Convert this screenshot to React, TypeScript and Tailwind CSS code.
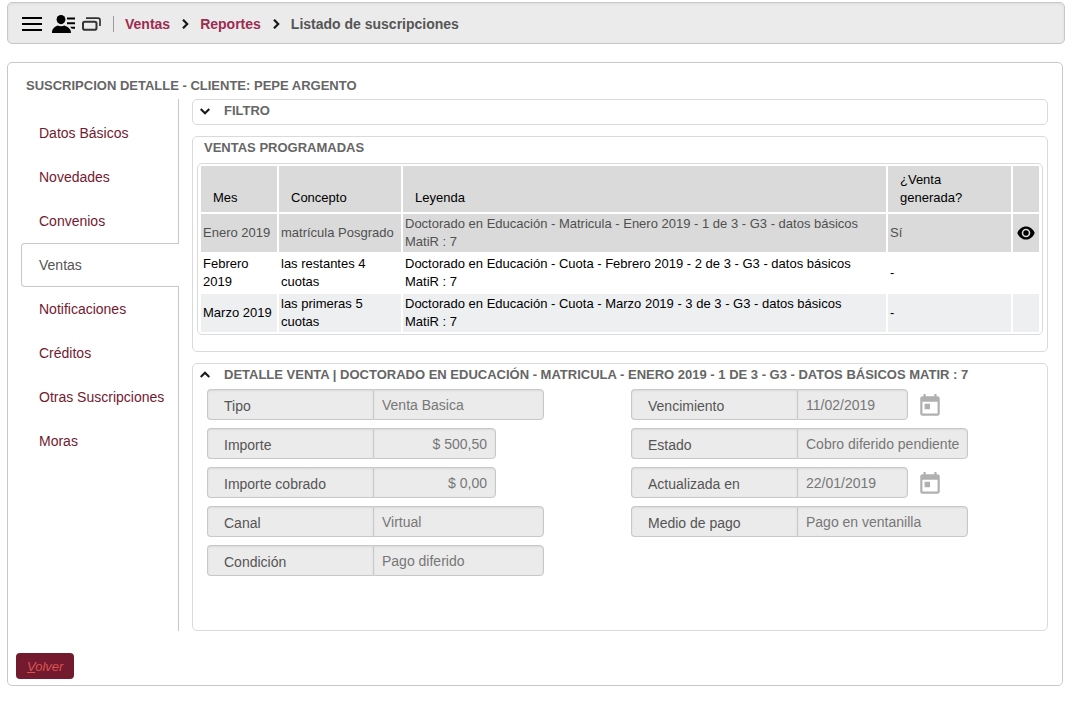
import { useState } from 'react'
import clsx from 'clsx'
import { MdToday } from 'react-icons/md'

// ========================================
// TYPES
// ========================================

interface Sale {
  month: string
  concept: string
  legend: string
  generated: boolean
}

interface FieldProps {
  id: string
  label: string
  value: string
  kind?: 'text' | 'amount' | 'date'
}

// ========================================
// DATA
// ========================================

const tabs = [
  'Datos Básicos',
  'Novedades',
  'Convenios',
  'Ventas',
  'Notificaciones',
  'Créditos',
  'Otras Suscripciones',
  'Moras',
]

// "MatiR : 7" is kept together with non-breaking spaces
const sales: Sale[] = [
  {
    month: 'Enero 2019',
    concept: 'matrícula Posgrado',
    legend: 'Doctorado en Educación - Matricula - Enero 2019 - 1 de 3 - G3 - datos básicos MatiR\u00a0:\u00a07',
    generated: true,
  },
  {
    month: 'Febrero 2019',
    concept: 'las restantes 4 cuotas',
    legend: 'Doctorado en Educación - Cuota - Febrero 2019 - 2 de 3 - G3 - datos básicos MatiR\u00a0:\u00a07',
    generated: false,
  },
  {
    month: 'Marzo 2019',
    concept: 'las primeras 5 cuotas',
    legend: 'Doctorado en Educación - Cuota - Marzo 2019 - 3 de 3 - G3 - datos básicos MatiR\u00a0:\u00a07',
    generated: false,
  },
]

const leftFields: FieldProps[] = [
  { id: 'tipo', label: 'Tipo', value: 'Venta Basica' },
  { id: 'importe', label: 'Importe', value: '$ 500,50', kind: 'amount' },
  { id: 'cobrado', label: 'Importe cobrado', value: '$ 0,00', kind: 'amount' },
  { id: 'canal', label: 'Canal', value: 'Virtual' },
  { id: 'condicion', label: 'Condición', value: 'Pago diferido' },
]

const rightFields: FieldProps[] = [
  { id: 'vencimiento', label: 'Vencimiento', value: '11/02/2019', kind: 'date' },
  { id: 'estado', label: 'Estado', value: 'Cobro diferido pendiente' },
  { id: 'actualizada', label: 'Actualizada en', value: '22/01/2019', kind: 'date' },
  { id: 'medio', label: 'Medio de pago', value: 'Pago en ventanilla' },
]

// ========================================
// ICONS
// ========================================

function MenuIcon() {
  return (
    <svg viewBox="0 0 20 14" className="h-[14px] w-5" fill="currentColor" aria-hidden="true">
      <path d="M0 0h20v2H0zM0 6h20v2H0zM0 12h20v2H0z" />
    </svg>
  )
}

function UserListIcon() {
  return (
    <svg viewBox="0 0 23 18" className="h-[18px] w-[23px]" fill="currentColor" aria-hidden="true">
      <ellipse cx="9" cy="4.6" rx="4.4" ry="4.6" />
      <path d="M0 18c0-4 2-5.600 5.500-7.400 2 1 5 1 7 0C16.500 12.400 19 14 19 18z" />
      <path d="M15 2.600h8v2h-8zM15 7.200h8v2h-8zM18 11.800h5v2h-3.200z" />
    </svg>
  )
}

function WindowsIcon() {
  return (
    <svg viewBox="0 0 19 14" className="h-[14px] w-[19px]" fill="none" stroke="#333" aria-hidden="true">
      <rect x="1" y="4.700" width="13.500" height="8" rx="1.800" strokeWidth="2" />
      <path d="M4 1.200h12a2 2 0 0 1 2 2V9" strokeWidth="1.700" />
    </svg>
  )
}

function EyeIcon() {
  return (
    <svg viewBox="0 0 18 14" className="h-[14px] w-[18px]" aria-hidden="true">
      <path d="M.3 7C2 2.800 5.200.4 9 .4S16 2.800 17.700 7C16 11.200 12.800 13.600 9 13.600S2 11.200.3 7z" fill="#000" />
      <circle cx="9" cy="7" r="3.500" fill="none" stroke="#dadada" strokeWidth="1.600" />
    </svg>
  )
}

function Chevron({ className }: { className?: string }) {
  return (
    <svg
      viewBox="0 0 10 10"
      className={clsx('size-[10px] shrink-0', className)}
      fill="none"
      stroke="#1a1a1a"
      strokeWidth="2.2"
      aria-hidden="true"
    >
      <path d="M.7 3 5 7.200 9.300 3" />
    </svg>
  )
}

// ========================================
// COMPONENTS
// ========================================

function TopBar() {
  return (
    <header className="mr-[13px] ml-[7px] flex h-[42px] items-center rounded-[5px] border border-[#c8c8c8] bg-[#ebebeb] pt-px pl-[14px] text-black shadow-[inset_0_1px_3px_rgba(0,0,0,0.06)]">
      <div className="flex items-center gap-[10px]">
        <button type="button" aria-label="Menú">
          <MenuIcon />
        </button>
        <button type="button" aria-label="Clientes">
          <UserListIcon />
        </button>
      </div>
      <button type="button" aria-label="Ventanas" className="ml-[7px]">
        <WindowsIcon />
      </button>
      <nav className="ml-3 flex h-4 items-center gap-[10px] border-l border-[#999] pl-[11px] text-sm font-bold">
        <a href="#ventas" className="text-[#9c2c50]">Ventas</a>
        <Chevron className="-rotate-90" />
        <a href="#reportes" className="text-[#9c2c50]">Reportes</a>
        <Chevron className="-rotate-90" />
        <span className="text-[#555]">Listado de suscripciones</span>
      </nav>
    </header>
  )
}

function Field({ id, label, value, kind = 'text' }: FieldProps) {
  return (
    <div className="flex h-[31px] items-center">
      <label
        htmlFor={id}
        className="h-full w-[166px] rounded-l-[4px] border border-r-0 border-[#c8c8c8] bg-[#ebebeb] pl-4 leading-8 text-[#555] shadow-[inset_0_1px_2px_rgba(0,0,0,0.08)]"
      >
        {label}
      </label>
      <input
        id={id}
        disabled
        defaultValue={value}
        className={clsx(
          'h-full rounded-r-[4px] border border-[#c8c8c8] bg-[#ebebeb] px-2 text-[#777] shadow-[inset_0_1px_2px_rgba(0,0,0,0.08)]',
          kind === 'text' && 'w-[171px]',
          kind === 'amount' && 'w-[123px] text-right',
          kind === 'date' && 'w-[111px]'
        )}
      />
      {kind === 'date' && (
        <button type="button" disabled aria-label={`Calendario ${label}`} className="ml-[9px] pt-[2px] text-[#b0b0b0]">
          <MdToday className="size-[26px]" />
        </button>
      )}
    </div>
  )
}

function SalesTable() {
  return (
    <div className="mx-1 rounded-[5px] border border-[#dadada] px-px">
      <table className="w-full table-fixed border-separate border-spacing-[2px] text-[13px] leading-[18px] text-black">
        <colgroup>
          <col className="w-[76px]" />
          <col className="w-[122px]" />
          <col />
          <col className="w-[123px]" />
          <col className="w-[26px]" />
        </colgroup>
        <thead>
          <tr className="bg-[#dadada] text-left align-bottom">
            <th className="px-3 py-[5px] font-normal">Mes</th>
            <th className="px-3 py-[5px] font-normal">Concepto</th>
            <th className="px-3 py-[5px] font-normal">Leyenda</th>
            <th className="px-3 py-[5px] font-normal">¿Venta generada?</th>
            <th aria-label="Acciones" />
          </tr>
        </thead>
        <tbody>
          {sales.map((sale) => (
            <tr
              key={sale.month}
              className={clsx(sale.generated ? 'bg-[#dadada] text-[#505050]' : 'even:bg-white odd:bg-[#edeff1]')}
            >
              <td className="px-[2px] py-px">{sale.month}</td>
              <td className="px-[2px] py-px">{sale.concept}</td>
              <td className="px-[2px] py-px">{sale.legend}</td>
              <td className="px-[2px] py-px">{sale.generated ? 'Sí' : '-'}</td>
              <td>
                {sale.generated && (
                  <button type="button" aria-label="Ver venta" className="mx-auto block">
                    <EyeIcon />
                  </button>
                )}
              </td>
            </tr>
          ))}
        </tbody>
      </table>
    </div>
  )
}

export default function App() {
  const [activeTab, setActiveTab] = useState('Ventas')
  const [filterOpen, setFilterOpen] = useState(false)
  const [detailOpen, setDetailOpen] = useState(true)

  return (
    <div className="bg-white pt-[2px] pb-7 font-['Liberation_Sans',Arial,sans-serif] text-sm">
      <TopBar />

      <main className="mt-[18px] mr-[15px] ml-[7px] rounded-[5px] border border-[#c8c8c8] pb-[6px]">
        <h1 className="pt-[14px] pl-[18px] text-[13px] leading-[18px] font-bold text-[#666]">
          SUSCRIPCION DETALLE - CLIENTE: PEPE ARGENTO
        </h1>

        <div className="mt-1 mr-[14px] ml-[13px] flex">
          {/* Tabs */}
          <nav className="flex w-[158px] shrink-0 flex-col">
            <div className="h-3 border-r border-[#c8c8c8]" />
            {tabs.map((tab) => (
              <button
                key={tab}
                type="button"
                onClick={() => setActiveTab(tab)}
                className={clsx(
                  'h-11 text-left whitespace-nowrap',
                  tab === activeTab
                    ? 'rounded-l-[4px] border-y border-l border-[#c8c8c8] pl-[17px] text-[#555]'
                    : 'border-r border-[#c8c8c8] pl-[18px] text-[#731a2f]'
                )}
              >
                {tab}
              </button>
            ))}
            <div className="flex-1 border-r border-[#c8c8c8]" />
          </nav>

          {/* Content */}
          <div className="ml-[13px] min-w-0 flex-1 text-[#666]">
            <section className="rounded-[5px] border border-[#dadada] pb-1">
              <button
                type="button"
                onClick={() => setFilterOpen(!filterOpen)}
                className="flex items-center gap-[14px] pt-[2px] pl-[7px] text-[13px] leading-[18px] font-bold"
              >
                <Chevron className={clsx(filterOpen && 'rotate-180')} />
                FILTRO
              </button>
            </section>

            <section className="mt-[11px] rounded-[5px] border border-[#dadada] pb-4">
              <h2 className="pt-[2px] pb-[6px] pl-[11px] text-[13px] leading-[18px] font-bold">VENTAS PROGRAMADAS</h2>
              <SalesTable />
            </section>

            <section className="mt-[11px] rounded-[5px] border border-[#dadada] pb-[54px]">
              <button
                type="button"
                onClick={() => setDetailOpen(!detailOpen)}
                className="flex items-center gap-[14px] pt-[2px] pl-[7px] text-left text-[13px] leading-[18px] font-bold"
              >
                <Chevron className={clsx(detailOpen && 'rotate-180')} />
                DETALLE VENTA | DOCTORADO EN EDUCACIÓN - MATRICULA - ENERO 2019 - 1 DE 3 - G3 - DATOS BÁSICOS MATIR : 7
              </button>
              {detailOpen && (
                <div className="mt-[5px] grid grid-cols-2 gap-2 pl-[14px]">
                  <div className="flex flex-col gap-2">
                    {leftFields.map((field) => (
                      <Field key={field.id} {...field} />
                    ))}
                  </div>
                  <div className="flex flex-col gap-2">
                    {rightFields.map((field) => (
                      <Field key={field.id} {...field} />
                    ))}
                  </div>
                </div>
              )}
            </section>
          </div>
        </div>

        <button
          type="button"
          className="mt-[22px] ml-2 block h-[26px] rounded-[4px] bg-[#731a2f] px-[11px] pt-[2px] text-[13px] text-[#d9534f] italic"
        >
          <span className="underline">V</span>olver
        </button>
      </main>
    </div>
  )
}
